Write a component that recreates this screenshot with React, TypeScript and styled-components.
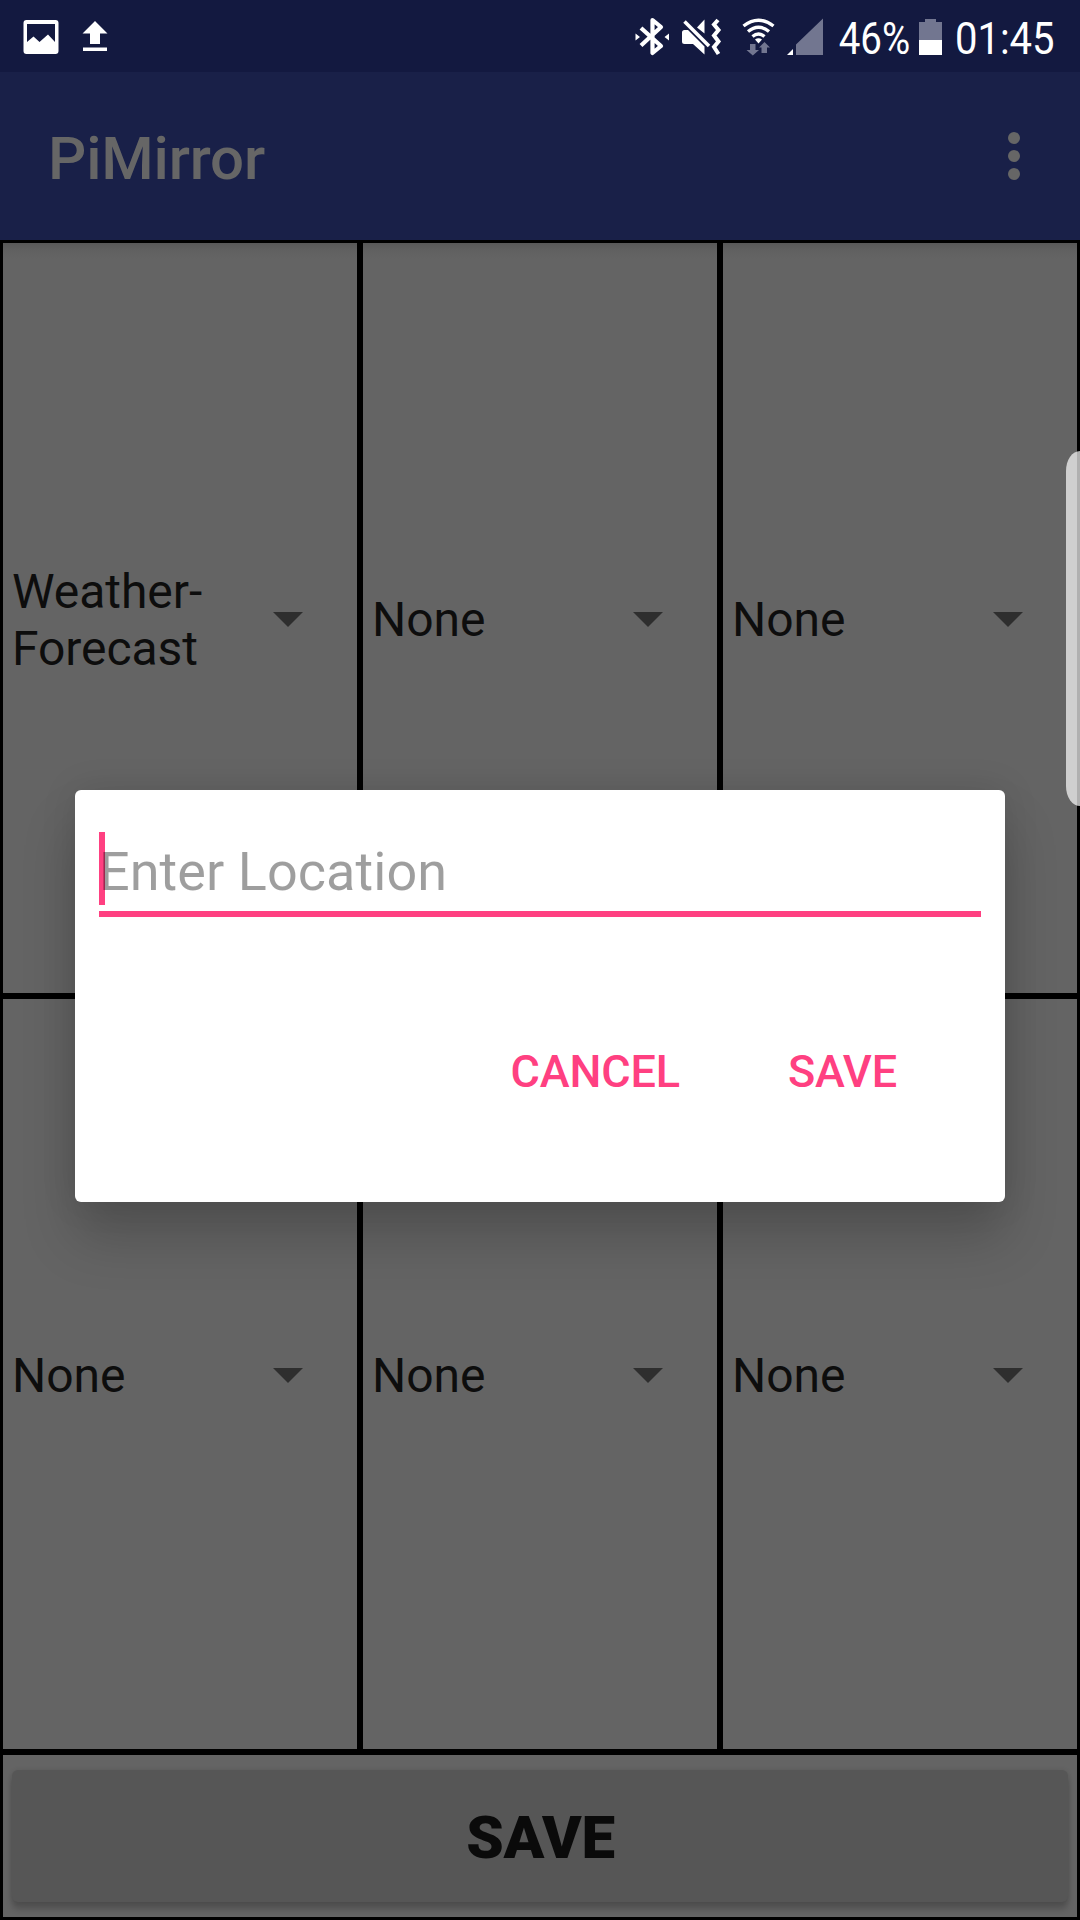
import React from "react";
import styled, { createGlobalStyle } from "styled-components";

const GlobalStyle = createGlobalStyle`
  *, *::before, *::after { box-sizing: border-box; }
  body { margin: 0; background: #646464; }
`;

const Screen = styled.div`
  position: relative;
  display: flex;
  flex-direction: column;
  width: 1080px;
  height: 1920px;
  overflow: hidden;
  background: #646464;
  font-family: Roboto, "Noto Sans", sans-serif;
`;

const StatusBar = styled.header`
  display: flex;
  justify-content: space-between;
  height: 72px;
  flex: none;
  background: #131940;
  color: #fff;
`;

const StatusGroup = styled.div`
  display: flex;
  height: 72px;
`;

const StatusText = styled.span<{ $width: number; $scale: number }>`
  display: block;
  width: ${(p) => p.$width}px;
  padding-left: 5.5px;
  font-size: 45px;
  line-height: 78px;
  white-space: nowrap;
  transform: scaleX(${(p) => p.$scale});
  transform-origin: left center;
`;

const Toolbar = styled.div`
  display: flex;
  align-items: center;
  justify-content: space-between;
  flex: none;
  height: 168px;
  padding: 0 60px 0 48px;
  background: #192048;
`;

const Title = styled.h1`
  margin: 6px 0 0;
  font-size: 60px;
  font-weight: 500;
  line-height: 70px;
  letter-spacing: -0.15px;
  color: #666;
`;

const MenuButton = styled.button`
  display: flex;
  flex-direction: column;
  gap: 6px;
  padding: 0;
  border: 0;
  background: none;
`;

const Dot = styled.span`
  width: 12px;
  height: 12px;
  border-radius: 50%;
  background: #666;
`;

const Grid = styled.main`
  display: grid;
  grid-template-columns: repeat(3, 360px);
  grid-template-rows: repeat(2, 756px);
  flex: none;
`;

const Cell = styled.div<{ $shaded: boolean }>`
  display: flex;
  align-items: center;
  justify-content: space-between;
  padding: 0 54px 0 9px;
  border: 3px solid #000;
  background: ${(p) =>
    p.$shaded ? "linear-gradient(#585858, #616161 8px, #646464 16px) #646464" : "#646464"};
`;

const CellLabel = styled.span`
  width: 216px;
  padding-top: 3px;
  font-size: 48px;
  line-height: 57px;
  letter-spacing: -0.05px;
  color: #0d0d0d;
  white-space: pre-line;
`;

const Arrow = styled.span`
  width: 0;
  height: 0;
  border: 15px solid transparent;
  border-top-color: #2e2e2e;
  border-bottom-width: 0;
  margin-top: 3px;
`;

const Footer = styled.footer`
  flex: none;
  height: 168px;
  padding: 15px 9px;
  border: 3px solid #000;
`;

const FooterButton = styled.button`
  display: block;
  width: 100%;
  height: 132px;
  padding: 4px 0 0 1px;
  border: 0;
  border-radius: 6px;
  background: #565656;
  box-shadow: 0 7px 6px rgba(0, 0, 0, 0.2), 0 0 5px rgba(0, 0, 0, 0.1);
  font: 900 60px/70px Roboto, sans-serif;
  letter-spacing: -0.2px;
  color: #0a0a0a;
`;

const Dialog = styled.section`
  position: absolute;
  left: 75px;
  top: 790px;
  width: 930px;
  height: 412px;
  padding: 42px 24px 0;
  border-radius: 6px;
  background: #fff;
  box-shadow: 0 36px 54px rgba(0, 0, 0, 0.19), 0 0 36px rgba(0, 0, 0, 0.1);
`;

const Field = styled.div`
  display: flex;
  height: 85px;
  border-bottom: 6px solid #ff4081;
`;

const Caret = styled.span`
  width: 6px;
  height: 73px;
  margin-right: -6px;
  background: #ff4081;
`;

const Placeholder = styled.span`
  position: relative;
  font-size: 54px;
  line-height: 79px;
  letter-spacing: 0.05px;
  color: rgba(0, 0, 0, 0.38);
`;

const Actions = styled.div`
  display: flex;
  justify-content: flex-end;
  gap: 108px;
  padding: 128px 84px 0 0;
`;

const ActionButton = styled.button`
  padding: 0;
  border: 0;
  background: none;
  font: 500 45px/54px Roboto, sans-serif;
  letter-spacing: -0.15px;
  color: #ff4081;
`;

const EdgeHandle = styled.div`
  position: absolute;
  right: 0;
  top: 451px;
  width: 14px;
  height: 355px;
  border-radius: 14px 0 0 14px / 20px 0 0 20px;
  background: rgba(255, 255, 255, 0.69);
`;

const NotificationIcons = () => (
  <svg width="120" height="72" viewBox="0 0 120 72" fill="#fff">
    <path
      fillRule="evenodd"
      d="M26.500 20h29q3 0 3 3v28q0 3-3 3h-29q-3 0-3-3V23q0-3 3-3ZM27 24v18l6.500-5.500 6 5.500 8.500-7.500 7 7.500V24Z"
    />
    <path d="M95 21l12.500 12.500H100V44H90V33.500h-7.500ZM83 47.500h24V51H83Z" />
  </svg>
);

const SystemIcons = () => (
  <svg width="204" height="72" viewBox="630 0 204 72" fill="#fff">
    <g fill="none" stroke="#fff" strokeWidth="4.200">
      <path d="M641 28l20 18-8.500 7V20l8.500 7L641 45.500" strokeLinejoin="round" />
      <path d="M718 20l-4 4.500 4.500 5.500-4.500 5.500 4.500 6-4.500 5.500 4.500 7" strokeWidth="4" />
      <path d="M684.500 21.500l24.500 24.500" strokeWidth="3.600" />
    </g>
    <path d="M635.500 33.500v7l4.500-3.500ZM669 33.500v7l-4.500-3.500Z" />
    <path d="M682 32.500q0-2.500 2.500-2.500h3.500l16.500 16.500V54.500L693 44h-8.500q-2.500 0-2.500-2.500ZM697 27.500l7.500-8V33.500Z" />
    <g fill="none" stroke="#fff" strokeWidth="3.400">
      <path d="M743.500 26q15-11.500 30 0" />
      <path d="M748 31.500q10.500-8.500 21 0" />
      <path d="M752.500 36.500q6-5 12 0" />
    </g>
    <path d="M755 39.500q3.500-2.500 7 0l-3.500 4Z" />
    <path
      fill="#727690"
      d="M750 44h5.500v6h3.500l-6.200 5.500-6.300-5.500h3.500ZM764.500 42l5.500 5.500h-3V53h-5.500v-5.500H759ZM796 44.500L823 18.500V55H796Z"
    />
    <path d="M787 55l6-6v6Z" />
  </svg>
);

const BatteryIcon = () => (
  <svg width="36" height="72" viewBox="914 0 36 72">
    <path fill="#727690" d="M925 19h11v3h6v18h-23V22h6Z" />
    <path fill="#fff" d="M919 40h23v15h-23Z" />
  </svg>
);

const cells = ["Weather-\nForecast", "None", "None", "None", "None", "None"];

export default function App() {
  return (
    <Screen>
      <GlobalStyle />
      <StatusBar>
        <StatusGroup>
          <NotificationIcons />
        </StatusGroup>
        <StatusGroup>
          <SystemIcons />
          <StatusText $width={80} $scale={0.855}>46%</StatusText>
          <BatteryIcon />
          <StatusText $width={130} $scale={0.89}>01:45</StatusText>
        </StatusGroup>
      </StatusBar>
      <Toolbar>
        <Title>PiMirror</Title>
        <MenuButton aria-label="More options">
          <Dot />
          <Dot />
          <Dot />
        </MenuButton>
      </Toolbar>
      <Grid>
        {cells.map((label, i) => (
          <Cell key={i} $shaded={i < 3}>
            <CellLabel>{label}</CellLabel>
            <Arrow />
          </Cell>
        ))}
      </Grid>
      <Footer>
        <FooterButton>SAVE</FooterButton>
      </Footer>
      <Dialog>
        <Field>
          <Caret />
          <Placeholder>Enter Location</Placeholder>
        </Field>
        <Actions>
          <ActionButton>CANCEL</ActionButton>
          <ActionButton>SAVE</ActionButton>
        </Actions>
      </Dialog>
      <EdgeHandle />
    </Screen>
  );
}
